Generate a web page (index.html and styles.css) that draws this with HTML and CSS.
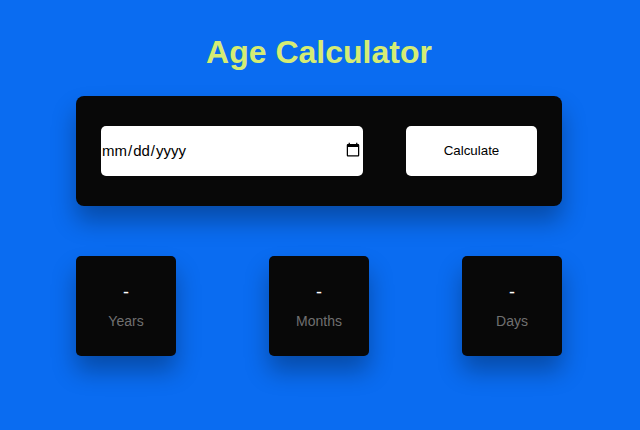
FILE: index.html
```html
<!DOCTYPE html>
<html lang="en">
<head>
<meta charset="utf-8">
<title>Age Calculator</title>
<link rel="stylesheet" href="styles.css">
</head>
<body>
<main class="container">
<h1>Age Calculator</h1>
<div class="inputs-wrapper">
<input type="date" id="date-input">
<button type="button">Calculate</button>
</div>
<div class="outputs-wrapper">
<div><span>-</span><p>Years</p></div>
<div><span>-</span><p>Months</p></div>
<div><span>-</span><p>Days</p></div>
</div>
</main>
</body>
</html>
```
FILE: styles.css
```css
* {
  box-sizing: border-box;
  margin: 0;
  padding: 0;
}

body {
  min-height: 100vh;
  background: #0a6cf1;
  font-family: "Liberation Sans", Arial, sans-serif;
}

.container {
  width: 486px;
  margin-left: 76px;
  padding-top: 33px;
}

h1 {
  color: #d5ec74;
  font-size: 32px;
  line-height: 38px;
  text-align: center;
  margin-bottom: 25px;
}

.inputs-wrapper {
  display: flex;
  align-items: center;
  justify-content: space-between;
  height: 110px;
  padding: 0 25px;
  background: #080808;
  border-radius: 8px;
  box-shadow: 0 15px 25px rgba(0, 0, 0, 0.3);
  margin-bottom: 50px;
}

input,
button {
  height: 50px;
  border: none;
  border-radius: 5px;
  background: #fff;
  color: #000;
}

input {
  width: 262px;
  padding-bottom: 2px;
  font: 15px "Liberation Sans", Arial, sans-serif;
}

input::-webkit-calendar-picker-indicator {
  width: 16px;
  height: 16px;
}

button {
  width: 131px;
  padding-bottom: 2px;
  font: 13.333px "Liberation Sans", Arial, sans-serif;
}

.outputs-wrapper {
  display: flex;
  justify-content: space-between;
}

.outputs-wrapper div {
  width: 100px;
  height: 100px;
  padding-top: 26px;
  background: #080808;
  border-radius: 5px;
  box-shadow: 0 15px 25px rgba(0, 0, 0, 0.3);
  color: #fff;
  text-align: center;
}

.outputs-wrapper span {
  display: block;
  font-size: 18px;
  line-height: 20px;
}

.outputs-wrapper p {
  margin-top: 11px;
  color: #707070;
  font-size: 14px;
  line-height: 16px;
}
```
